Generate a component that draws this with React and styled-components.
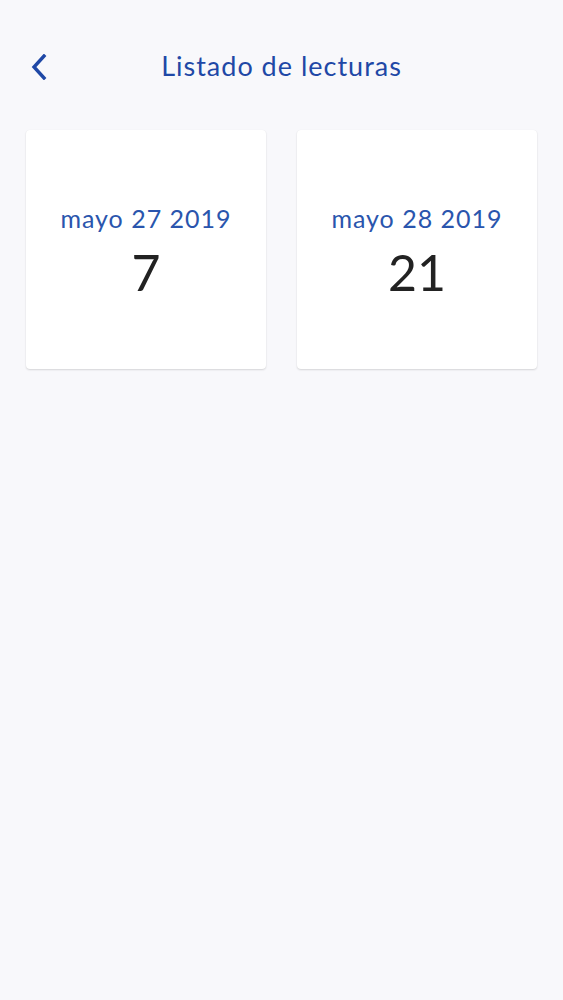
import React from "react";
import styled, { createGlobalStyle } from "styled-components";

const Global = createGlobalStyle`
  html, body { margin: 0; padding: 0; background: #f8f8fb; }
  body { font-family: "Lato", "Open Sans", sans-serif; }
`;

const Page = styled.div`
  width: 563px;
  min-height: 1000px;
  background: #f8f8fb;
  box-sizing: border-box;
`;

const Header = styled.header`
  position: relative;
  height: 130px;
  box-sizing: border-box;
  padding-top: 47px;
  display: flex;
  justify-content: center;
  align-items: flex-start;
`;

const BackButton = styled.button`
  position: absolute;
  left: 24px;
  top: 52px;
  width: 30px;
  height: 30px;
  padding: 0;
  border: 0;
  background: none;
  display: flex;
  align-items: center;
  justify-content: center;
`;

const Title = styled.h1`
  margin: 0;
  font-size: 27px;
  line-height: 38px;
  font-weight: 400;
  color: #1f48a6;
  letter-spacing: 1px;
`;

const Grid = styled.div`
  display: grid;
  grid-template-columns: 240px 240px;
  column-gap: 31px;
  row-gap: 31px;
  padding: 0 26px;
`;

const Card = styled.div`
  height: 239px;
  background: #fff;
  border-radius: 4px;
  box-shadow: 0 1px 2px rgba(0, 0, 0, 0.14), 0 0 1px rgba(0, 0, 0, 0.05);
  display: flex;
  flex-direction: column;
  align-items: center;
  justify-content: center;
  padding-top: 6px;
  box-sizing: border-box;
`;

const DateText = styled.div`
  font-size: 25px;
  line-height: 30px;
  color: #2a55ad;
  font-weight: 400;
  letter-spacing: 1px;
`;

const Count = styled.div`
  margin-top: 9px;
  font-size: 50px;
  line-height: 60px;
  color: #222;
  font-weight: 400;
`;

const readings = [
  { date: "mayo 27 2019", count: 7 },
  { date: "mayo 28 2019", count: 21 },
];

export default function App() {
  return (
    <Page>
      <Global />
      <Header>
        <BackButton aria-label="Atrás">
          <svg width="18" height="26" viewBox="0 0 18 26">
            <path d="M14 2 L4 13 L14 24" fill="none" stroke="#1f48a6" strokeWidth="3.4" strokeLinecap="square" />
          </svg>
        </BackButton>
        <Title>Listado de lecturas</Title>
      </Header>
      <Grid>
        {readings.map((r) => (
          <Card key={r.date}>
            <DateText>{r.date}</DateText>
            <Count>{r.count}</Count>
          </Card>
        ))}
      </Grid>
    </Page>
  );
}
